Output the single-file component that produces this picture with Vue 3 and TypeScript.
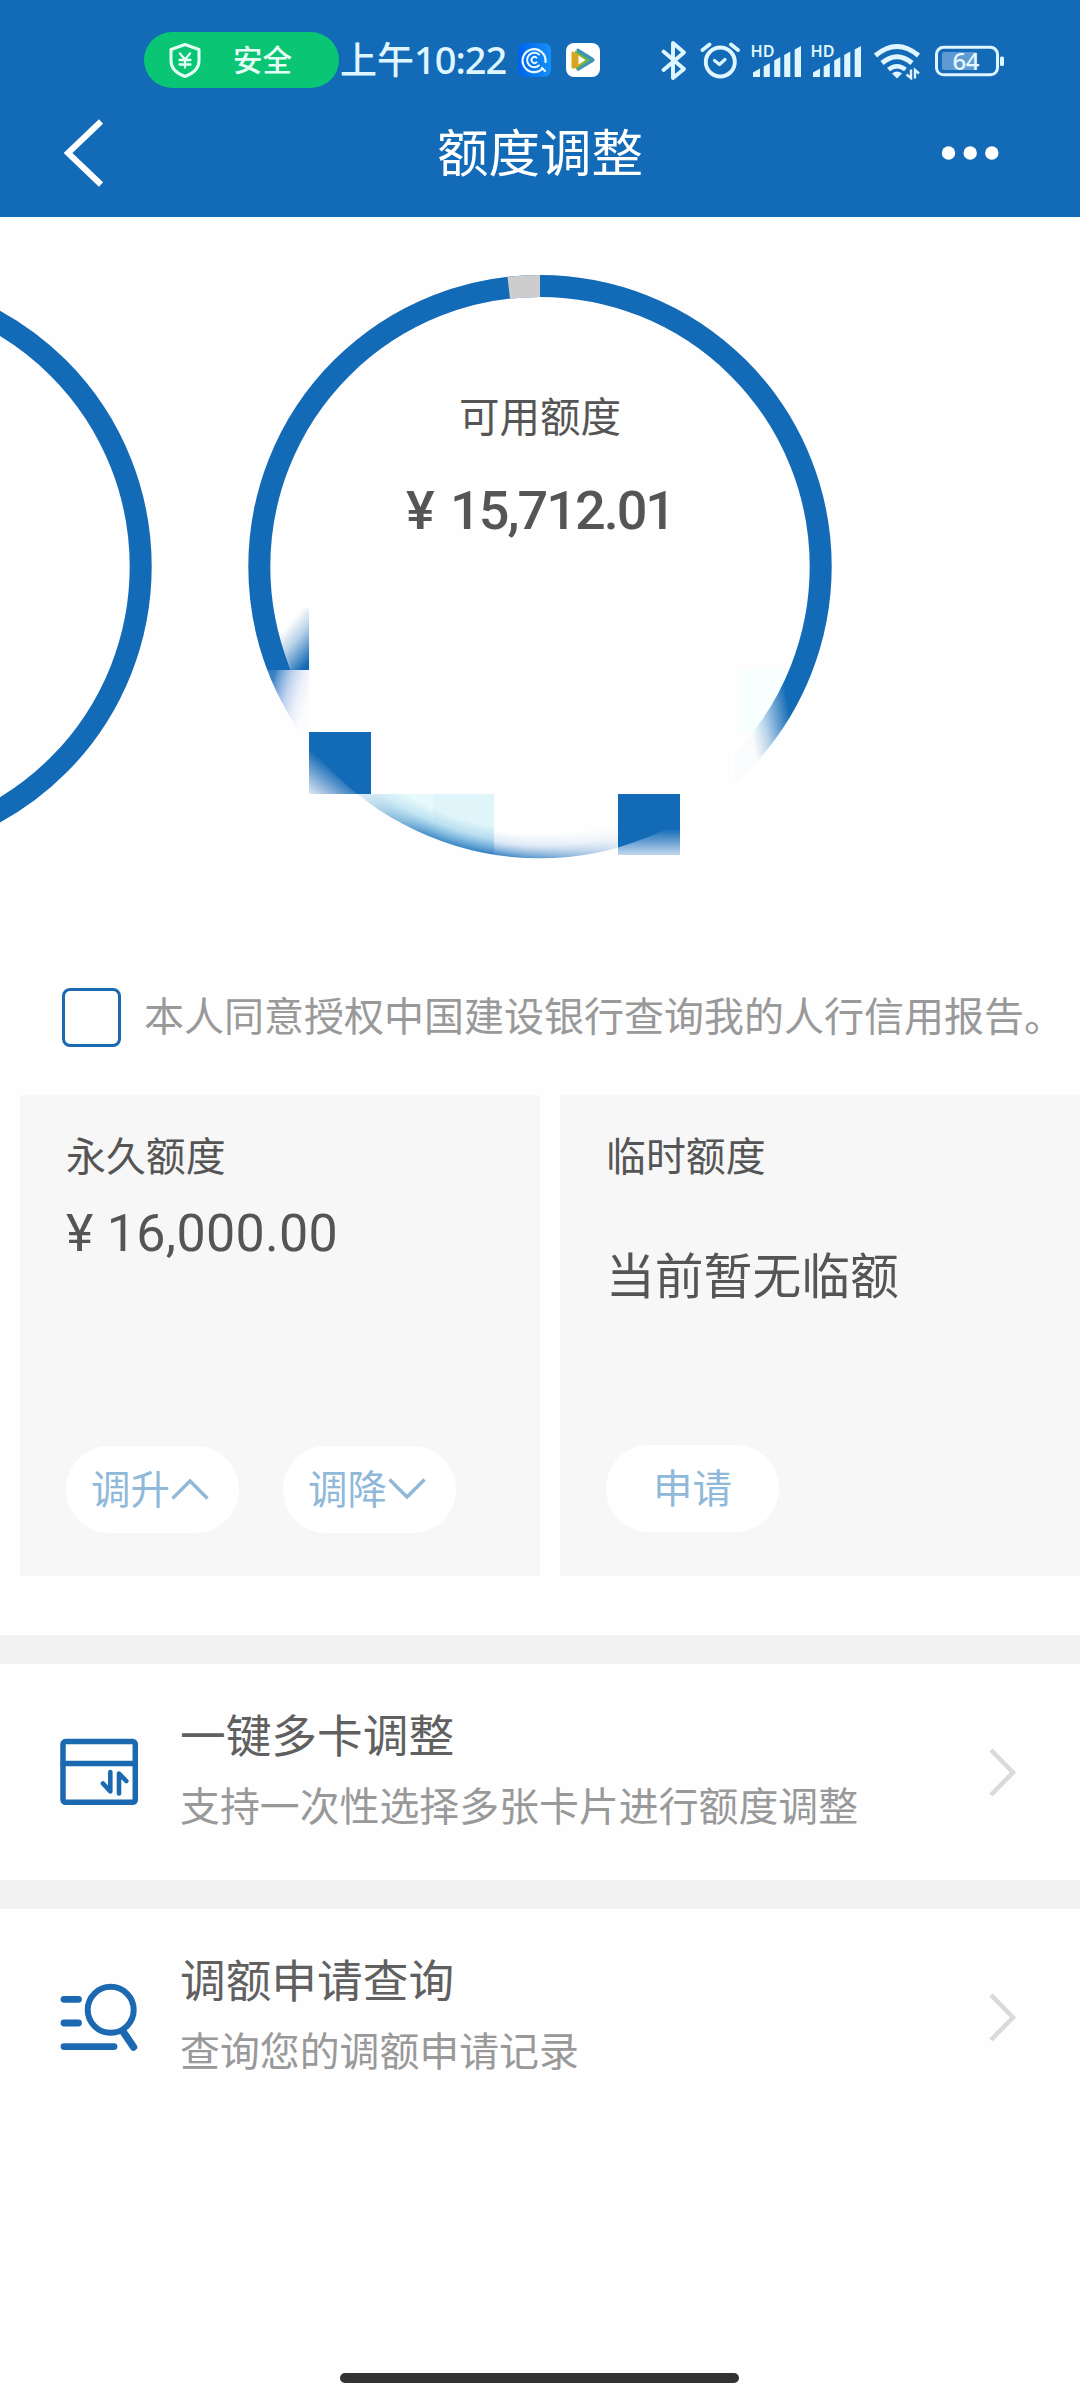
<script setup lang="ts">
interface Entry {
  id: string
  title: string
  note: string
}

const entries: Entry[] = [
  { id: 'cards', title: '一键多卡调整', note: '支持一次性选择多张卡片进行额度调整' },
  { id: 'search', title: '调额申请查询', note: '查询您的调额申请记录' },
]

const signals: number[] = [0, 1]
</script>

<template>
  <div class="screen">
    <header class="header">
      <div class="status">
        <div class="pill">
          <svg class="shield" viewBox="168 42 34 37" width="34" height="37" fill="none" stroke="#e6fff6" stroke-width="3" stroke-linejoin="round" stroke-linecap="round">
            <path d="M185 44.5 L199 49.5 V61 C199 69 193 73.500 185 76.500 C177 73.500 171 69 171 61 V49.500 Z" />
            <path d="M180 53.500 L185 59.500 L190 53.500 M185 59.500 V67.500 M179.500 60 H190.500 M179.500 64.500 H190.500" stroke-width="2.300" />
          </svg>
          <span class="pill-text">安全</span>
        </div>
        <div class="clock">上午<span class="digits">10:22</span></div>
        <svg class="app-a" viewBox="0 0 33 34" width="33" height="34" fill="none">
          <defs>
            <linearGradient id="appBlue" x1="0" y1="0" x2="1" y2="0">
              <stop offset="0" stop-color="#0062ee" />
              <stop offset="1" stop-color="#1590f6" />
            </linearGradient>
          </defs>
          <rect width="33" height="34" rx="7" fill="url(#appBlue)" />
          <path d="M24.500 25.500 A11.500 11.500 0 1 1 27.500 19 M24 25 L27 28" stroke="#e8fbff" stroke-width="2.200" stroke-linecap="round" />
          <path d="M21 22.500 A7.200 7.200 0 1 1 21 11.500" stroke="#e8fbff" stroke-width="2" stroke-linecap="round" />
          <path d="M18.500 19.300 A3 3 0 1 1 18.500 14.700" stroke="#e8fbff" stroke-width="1.900" stroke-linecap="round" />
        </svg>
        <svg class="app-b" viewBox="0 0 34 34" width="34" height="34">
          <rect width="34" height="34" rx="8" fill="#fff" />
          <path d="M10.500 6.500 Q11 5 13 6 L27.500 15 Q29.500 17 27.500 18.800 L13 27.500 Q11 28.500 10.500 26.500 Z" fill="#3f93b8" />
          <path d="M9 7.500 L24 17 L10 26.500 Z" fill="#6cb83b" />
          <path d="M5.500 10 Q6 7.500 9 9.500 L18 15.500 V19 L9 25.500 Q6 26.500 5.500 24 Z" fill="#d9a520" />
          <path d="M12.500 12.500 L19.500 17 L12.500 21.500 Z" fill="#fff" />
        </svg>
        <div class="indicators">
          <svg viewBox="660 38 28 43" width="28" height="43" fill="none" stroke="#dff5ff" stroke-width="3.900" stroke-linejoin="round" stroke-linecap="round">
            <path d="M663.500 50.500 L684 68 L673 77 V42 L684 51.500 L663.500 69" />
          </svg>
          <svg viewBox="700 38 41 43" width="41" height="43" fill="none" stroke="#dff5ff" stroke-linecap="round">
            <circle cx="720.300" cy="61" r="14.500" stroke-width="3.900" />
            <path d="M714.500 59.500 L719.500 63.500 L725 58.500" stroke-width="3.200" stroke-linejoin="round" />
            <path d="M702.500 49 L709.500 43.500 M731 43.500 L738 49" stroke-width="3.800" />
          </svg>
          <svg v-for="n in signals" :key="n" viewBox="750 38 53 43" width="53" height="43" fill="#dff5ff">
            <text x="750.500" y="55.800" class="hd" textLength="24" lengthAdjust="spacingAndGlyphs">HD</text>
            <path d="M753 76 V71.500 L760 67.500 V76 Z M763.700 76 V65.500 L769.800 62 V76 Z M774.200 76 V59.500 L780.300 56 V76 Z M784.200 76 V54 L790.300 50.500 V76 Z M794.700 76 V48.500 L801 45 V76 Z" />
          </svg>
          <svg viewBox="873 38 48 43" width="48" height="43" fill="none" stroke="#dff5ff">
            <path d="M875.500 54.500 Q897 36.500 918.500 54.500" stroke-width="5" />
            <path d="M882 62 Q897 49.500 912 62" stroke-width="5" />
            <path d="M888.500 68.500 Q897 62 905.500 68.500" stroke-width="4.600" />
            <path d="M892 72.500 Q897 68.500 902 72.500 L897 77.500 Z" fill="#dff5ff" stroke="none" />
            <path d="M911 68.500 V77 L906.500 73.500 M915 77.500 V69 L919 72.500" stroke-width="2.400" />
          </svg>
          <svg viewBox="934 38 71 43" width="71" height="43" fill="none">
            <rect x="936.500" y="46.300" width="61" height="27.500" rx="7" stroke="#dff5ff" stroke-width="3" />
            <rect x="942" y="51" width="35" height="18" rx="2" fill="#5f9bd2" />
            <rect x="1000" y="55.500" width="4" height="9.500" rx="1.500" fill="#dff5ff" />
            <text x="952.500" y="69" class="battery-text" textLength="27">64</text>
          </svg>
        </div>
      </div>
      <nav class="nav">
        <svg class="back" viewBox="62 117 44 72" width="44" height="72" fill="none" stroke="#fff" stroke-width="6">
          <path d="M101 121.500 L68 153 L101 184.500" />
        </svg>
        <h1 class="title">额度调整</h1>
        <svg class="more" viewBox="940 140 60 26" width="60" height="26" fill="#fff">
          <circle cx="948.500" cy="153" r="6.700" />
          <circle cx="970.200" cy="153" r="6.700" />
          <circle cx="991.800" cy="153" r="6.700" />
        </svg>
      </nav>
    </header>

    <section class="gauge">
      <svg class="rings" viewBox="0 217 1080 743" width="1080" height="743">
        <defs>
          <clipPath id="disc"><circle cx="540" cy="566.600" r="291.700" /></clipPath>
          <clipPath id="solidArea"><path d="M200 200 H880 V900 H735 V670 H200 Z" /></clipPath>
          <linearGradient id="rightFade" gradientUnits="userSpaceOnUse" x1="748" y1="710" x2="788" y2="703">
            <stop offset="0" stop-color="#fff" stop-opacity="0.020" />
            <stop offset="0.350" stop-color="#fff" stop-opacity="0.280" />
            <stop offset="1" stop-color="#fff" />
          </linearGradient>
          <mask id="rightMask" maskUnits="userSpaceOnUse" x="0" y="200" width="1080" height="700">
            <rect x="0" y="200" width="700" height="700" fill="#fff" />
            <rect x="700" y="200" width="380" height="450" fill="#fff" />
            <rect x="700" y="650" width="380" height="250" fill="url(#rightFade)" />
          </mask>
          <linearGradient id="tailA" gradientUnits="userSpaceOnUse" x1="284" y1="630" x2="314" y2="656">
            <stop offset="0" stop-color="#136ab6" stop-opacity="0" />
            <stop offset="0.400" stop-color="#136ab6" stop-opacity="0.300" />
            <stop offset="1" stop-color="#136ab6" />
          </linearGradient>
          <linearGradient id="tailB" gradientUnits="userSpaceOnUse" x1="271" y1="684" x2="309" y2="695">
            <stop offset="0" stop-color="#136ab6" stop-opacity="0.850" />
            <stop offset="0.450" stop-color="#7fa6e0" stop-opacity="0.480" />
            <stop offset="0.750" stop-color="#a0b4e8" stop-opacity="0.180" />
            <stop offset="1" stop-color="#a0b4e8" stop-opacity="0.020" />
          </linearGradient>
          <linearGradient id="cornerC" gradientUnits="userSpaceOnUse" x1="332" y1="767" x2="309" y2="796">
            <stop offset="0" stop-color="#136ab6" />
            <stop offset="1" stop-color="#eceef5" />
          </linearGradient>
          <linearGradient id="teal" x1="0" y1="0.800" x2="1" y2="0.300">
            <stop offset="0" stop-color="#d8f4fa" stop-opacity="0.300" />
            <stop offset="1" stop-color="#e6fafc" />
          </linearGradient>
          <radialGradient id="rim" gradientUnits="userSpaceOnUse" cx="540" cy="566.600" r="291.700">
            <stop offset="0.905" stop-color="#2f8fd0" stop-opacity="0" />
            <stop offset="0.945" stop-color="#2f8fd0" stop-opacity="0.220" />
            <stop offset="1" stop-color="#136ab6" stop-opacity="0.850" />
          </radialGradient>
          <radialGradient id="thinRim" gradientUnits="userSpaceOnUse" cx="540" cy="566.600" r="291.700">
            <stop offset="0.918" stop-color="#4f8fd6" stop-opacity="0" />
            <stop offset="0.955" stop-color="#4f8fd6" stop-opacity="0.200" />
            <stop offset="1" stop-color="#136ab6" stop-opacity="0.850" />
          </radialGradient>
          <linearGradient id="rimFade" gradientUnits="userSpaceOnUse" x1="360" y1="0" x2="622" y2="0">
            <stop offset="0" stop-color="#fff" stop-opacity="0.100" />
            <stop offset="0.250" stop-color="#fff" stop-opacity="0.900" />
            <stop offset="0.500" stop-color="#fff" />
            <stop offset="0.720" stop-color="#fff" stop-opacity="0.750" />
            <stop offset="1" stop-color="#fff" stop-opacity="0.150" />
          </linearGradient>
          <mask id="rimMask" maskUnits="userSpaceOnUse" x="355" y="780" width="263" height="90">
            <rect x="355" y="780" width="263" height="90" fill="url(#rimFade)" />
          </mask>
          <linearGradient id="cornerF" gradientUnits="userSpaceOnUse" x1="0" y1="829" x2="0" y2="857">
            <stop offset="0" stop-color="#136ab6" />
            <stop offset="1" stop-color="#cfe0f3" />
          </linearGradient>
        </defs>

        <circle cx="-140" cy="566.600" r="280.700" fill="none" stroke="#136ab6" stroke-width="22" />

        <rect x="740" y="670" width="62" height="62" fill="#f8ffff" clip-path="url(#disc)" />
        <g clip-path="url(#solidArea)">
          <g mask="url(#rightMask)">
            <circle cx="540" cy="566.600" r="280.700" fill="none" stroke="#136ab6" stroke-width="22" />
          </g>
        </g>
        <path d="M507.500 276.700 A291.700 291.700 0 0 1 540 274.900 V297 A269.600 269.600 0 0 0 510 298.700 Z" fill="#cdcdcd" />

        <path d="M274 608.500 H309 V670 H291 A269.700 269.700 0 0 1 274 608.500 Z" fill="url(#tailA)" />
        <rect x="247" y="670" width="62" height="80" fill="url(#tailB)" clip-path="url(#disc)" />
        <rect x="309" y="732" width="62" height="62" fill="url(#cornerC)" />
        <rect x="309" y="732" width="62" height="62" fill="#136ab6" clip-path="url(#disc)" />
        <g clip-path="url(#disc)">
          <rect x="355" y="794" width="77.500" height="66" fill="url(#teal)" />
          <rect x="432.500" y="794" width="61.500" height="61" fill="#e0f5f9" />
          <g mask="url(#rimMask)">
            <rect x="355" y="794" width="139" height="66" fill="url(#rim)" />
            <rect x="494" y="794" width="124" height="66" fill="url(#thinRim)" />
          </g>
        </g>
        <rect x="618" y="794" width="62" height="61" fill="url(#cornerF)" />
        <path d="M618 794 H680 V822 Q650 838 618 847.500 Z" fill="#136ab6" />
      </svg>
      <div class="gauge-copy">
        <div class="gauge-label">可用额度</div>
        <div class="gauge-amount">¥ 15,712.01</div>
      </div>
    </section>

    <label class="consent">
      <span class="box"></span>
      <span class="consent-text">本人同意授权中国建设银行查询我的人行信用报告。</span>
    </label>

    <section class="limits">
      <article class="limit">
        <div class="limit-name">永久额度</div>
        <div class="limit-amount">¥ 16,000.00</div>
        <div class="actions">
          <button class="action stepper" type="button">
            调升
            <svg viewBox="0 0 40 24" width="40" height="24" fill="none" stroke="#90b9d9" stroke-width="3.400"><path d="M2.500 21.500 L20 4 L37.500 21.500" /></svg>
          </button>
          <button class="action stepper" type="button">
            调降
            <svg viewBox="0 0 40 24" width="40" height="24" fill="none" stroke="#90b9d9" stroke-width="3.400"><path d="M2.500 2.500 L20 20 L37.500 2.500" /></svg>
          </button>
        </div>
      </article>
      <article class="limit">
        <div class="limit-name">临时额度</div>
        <div class="limit-empty">当前暂无临额</div>
        <div class="actions raised">
          <button class="action" type="button">申请</button>
        </div>
      </article>
    </section>

    <section v-for="entry in entries" :key="entry.id" class="entry">
      <svg v-if="entry.id === 'cards'" class="entry-icon" viewBox="60 1738 79 68" width="79" height="68" fill="none" stroke="#1b69b0" stroke-width="5.500" stroke-linecap="round" stroke-linejoin="round">
        <rect x="63" y="1741.600" width="72.300" height="60.600" rx="2.500" />
        <path d="M63 1763.500 H135" />
        <path d="M110.300 1772 V1791.500 L103 1783.500 M119 1793.500 V1773.500 L126.300 1781" stroke-width="4.600" />
      </svg>
      <svg v-else class="entry-icon" viewBox="60 1983 79 68" width="79" height="68" fill="none" stroke="#1b69b0" stroke-width="6" stroke-linecap="round">
        <circle cx="110.700" cy="2009.800" r="23" />
        <path d="M123 2031.500 L133.500 2047" stroke-width="7.500" />
        <path d="M64 1999.300 H78.500 M64 2023 H78.500 M64 2046.600 H114" stroke-width="6.800" />
      </svg>
      <div class="entry-copy">
        <div class="entry-title">{{ entry.title }}</div>
        <div class="entry-note">{{ entry.note }}</div>
      </div>
      <svg class="arrow" viewBox="0 0 30 50" width="30" height="50" fill="none" stroke="#dadada" stroke-width="4.600"><path d="M3 3 L25 25.500 L3 48" /></svg>
    </section>

    <div class="home-bar"></div>
  </div>
</template>

<style>
body {
  margin: 0;
  background: #fefefe;
}
</style>

<style scoped>
.screen {
  width: 1080px;
  height: 2400px;
  display: flex;
  flex-direction: column;
  overflow: hidden;
  background: #fefefe;
  font-family: "Noto Sans CJK SC", sans-serif;
  color: #555;
}
svg {
  display: block;
  flex: none;
}
.header {
  height: 217px;
  flex: none;
  background: #136ab6;
  color: #fff;
}
.status {
  height: 56px;
  padding: 32px 0 0 144px;
  display: flex;
  align-items: center;
}
.pill {
  box-sizing: border-box;
  width: 195px;
  height: 56px;
  padding-left: 24px;
  border-radius: 28px;
  background: #0ac573;
  display: flex;
  align-items: center;
}
.pill-text {
  margin-left: 31px;
  font-size: 29.5px;
  line-height: 40px;
  font-weight: 500;
  color: #e6fff6;
  margin-top: -5px;
}
.clock {
  width: 178px;
  margin-left: 1px;
  font-size: 37px;
  line-height: 54px;
  margin-top: -4px;
  font-weight: 500;
  white-space: nowrap;
  color: #dff5ff;
}
.digits {
  font-family: "Noto Sans", sans-serif;
  font-size: 38px;
  letter-spacing: -1px;
}
.app-b {
  margin-left: 15px;
}
.indicators {
  margin-left: 60px;
  display: flex;
  align-items: center;
}
.indicators svg:nth-child(2) { margin-left: 12px; }
.indicators svg:nth-child(3) { margin-left: 9px; }
.indicators svg:nth-child(4) { margin-left: 7px; }
.indicators svg:nth-child(5) { margin-left: 10px; }
.indicators svg:nth-child(6) { margin-left: 13px; }
.hd {
  font: 600 16.5px "Noto Sans", sans-serif;
}
.battery-text {
  font: 500 24px "Noto Sans", sans-serif;
  fill: #e6f8ff;
}
.nav {
  height: 72px;
  margin-top: 29px;
  padding: 0 80px 0 62px;
  display: grid;
  grid-template-columns: 60px 1fr 60px;
  align-items: center;
}
.title {
  margin: -6px 0 0 18px;
  text-align: center;
  font-size: 51.500px;
  line-height: 72px;
  font-weight: 400;
}
.gauge {
  height: 743px;
  flex: none;
  display: grid;
}
.rings,
.gauge-copy {
  grid-area: 1 / 1;
}
.gauge-copy {
  z-index: 1;
  padding-top: 170px;
  text-align: center;
}
.gauge-label {
  font-size: 40.500px;
  line-height: 56px;
}
.gauge-amount {
  margin-top: 33px;
  font-family: Roboto, sans-serif;
  font-weight: 500;
  font-size: 54px;
  line-height: 70px;
  letter-spacing: -2px;
  word-spacing: 6px;
}
.consent {
  height: 60px;
  flex: none;
  margin: 27px 0 0 62px;
  display: flex;
  align-items: center;
}
.box {
  box-sizing: border-box;
  width: 59px;
  height: 59px;
  border: 3.500px solid #1b69b0;
  border-radius: 8px;
}
.consent-text {
  margin: -7px 0 0 23px;
  font-size: 40px;
  line-height: 60px;
  color: #999;
  white-space: nowrap;
}
.limits {
  height: 481px;
  flex: none;
  margin: 48px 0 59px 20px;
  display: grid;
  grid-template-columns: 520px 520px;
  gap: 20px;
}
.limit {
  box-sizing: border-box;
  padding: 29px 0 43px 46px;
  background: #f7f7f7;
  display: flex;
  flex-direction: column;
}
.limit-name {
  font-size: 39.900px;
  line-height: 60px;
}
.limit-amount {
  margin-top: 17px;
  font-family: Roboto, sans-serif;
  font-size: 52px;
  line-height: 66px;
  letter-spacing: 0.3px;
}
.limit-empty {
  margin-top: 54px;
  font-size: 48.800px;
  line-height: 70px;
}
.actions {
  margin-top: auto;
  display: flex;
  gap: 44px;
}
.raised {
  margin-bottom: 1px;
}
.action {
  box-sizing: border-box;
  width: 173px;
  height: 87px;
  padding: 0 0 5px;
  border: 0;
  border-radius: 44px;
  background: #fff;
  color: #90b9d9;
  font: 400 39.500px/60px "Noto Sans CJK SC", sans-serif;
  display: flex;
  justify-content: center;
  align-items: center;
}
.stepper {
  padding-right: 4px;
}
.action svg {
  margin-top: 3px;
}
.entry {
  box-sizing: border-box;
  height: 245px;
  flex: none;
  border-top: 29px solid #f1f1f1;
  padding: 0 62px 0 60px;
  display: flex;
  align-items: center;
}
.entry-copy {
  flex: 1;
  margin: -12px 0 0 41px;
}
.entry-title {
  font-size: 45.700px;
  line-height: 70px;
  color: #606060;
}
.entry-note {
  font-size: 39.900px;
  line-height: 60px;
  margin-top: 6px;
  color: #999;
}
.home-bar {
  width: 399px;
  height: 10px;
  flex: none;
  margin: auto auto 17px 340px;
  border-radius: 5px;
  background: #333;
}
</style>
